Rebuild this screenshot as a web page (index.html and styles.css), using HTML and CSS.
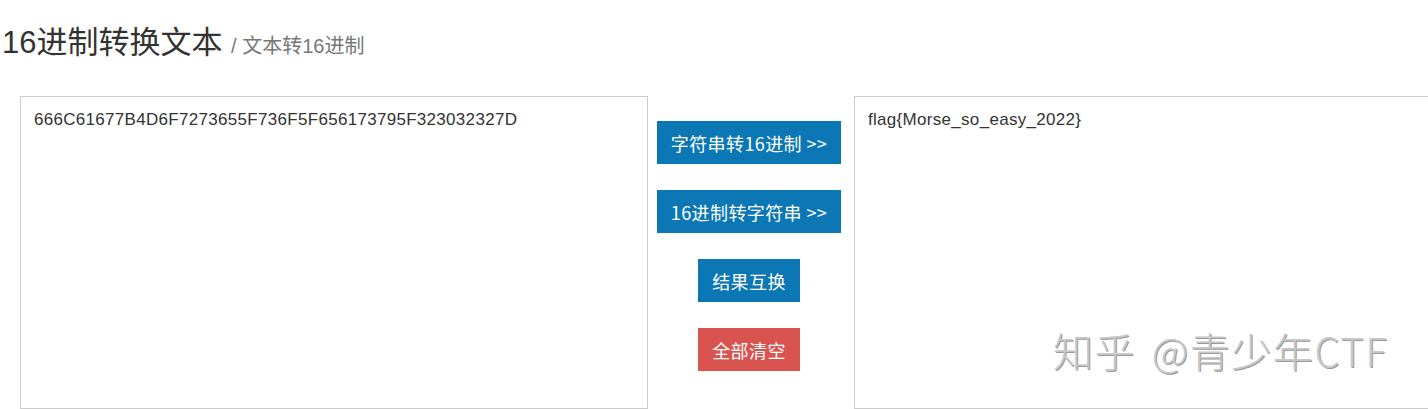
FILE: index.html
```html
<!DOCTYPE html>
<html lang="zh-CN">
<head>
  <meta charset="UTF-8">
  <meta name="viewport" content="width=device-width, initial-scale=1.0">
  <title>16进制转换文本</title>
  <link rel="stylesheet" href="styles.css">
</head>
<body>
  <h1 class="titulo">16进制转换文本 <small>/ 文本转16进制</small></h1>

  <div class="conversor">
    <textarea class="caixa" id="entrada">666C61677B4D6F7273655F736F5F656173795F323032327D</textarea>
    <div class="acoes">
      <button class="botao">字符串转16进制 &gt;&gt;</button>
      <button class="botao">16进制转字符串 &gt;&gt;</button>
      <button class="botao">结果互换</button>
      <button class="botao perigo">全部清空</button>
    </div>
    <textarea class="caixa" id="saida">flag{Morse_so_easy_2022}</textarea>
  </div>

  <div class="marca">知乎 @青少年CTF</div>
</body>
</html>
```

FILE: styles.css
```css
html, body { margin: 0; padding: 0; overflow: hidden; background: #fff; }
body { font-family: "Liberation Sans", "Noto Sans CJK SC", sans-serif; color: #333; position: relative; height: 409px; }

.titulo { font-size: 31px; font-weight: normal; line-height: 37px; margin: 0; padding: 24px 0 0 2px; height: 37px; color: #333; }
.titulo small { font-size: 20px; color: #777; }

.conversor { display: flex; margin: 35px 0 0 20px; width: 1500px; }
.caixa { flex: 0 0 628px; height: 313px; box-sizing: border-box; border: 1px solid #ccc; padding: 11px 13px 8px; margin: 0; resize: none; font-family: "Liberation Sans", sans-serif; font-size: 17px; letter-spacing: 0.3px; line-height: 24px; color: #333; outline: none; }

.acoes { flex: 0 0 206px; box-sizing: border-box; padding: 25px 4px 0 0; display: flex; flex-direction: column; align-items: center; gap: 26px; }
.botao { height: 43px; padding: 0 14px; border: none; background: #0b77b4; color: #fff; font-family: "Noto Sans CJK SC", sans-serif; font-size: 18px; letter-spacing: 0.4px; cursor: pointer; white-space: nowrap; }
.botao.perigo { background: #d9534f; }

.marca { position: absolute; left: 1053px; top: 328px; font-family: "Noto Sans CJK SC", sans-serif; font-size: 40px; font-weight: 300; letter-spacing: 1.6px; word-spacing: 5px; line-height: 44px; color: #c8c8c8; text-shadow: 1px 1px 0 #999; white-space: nowrap; pointer-events: none; }
```
